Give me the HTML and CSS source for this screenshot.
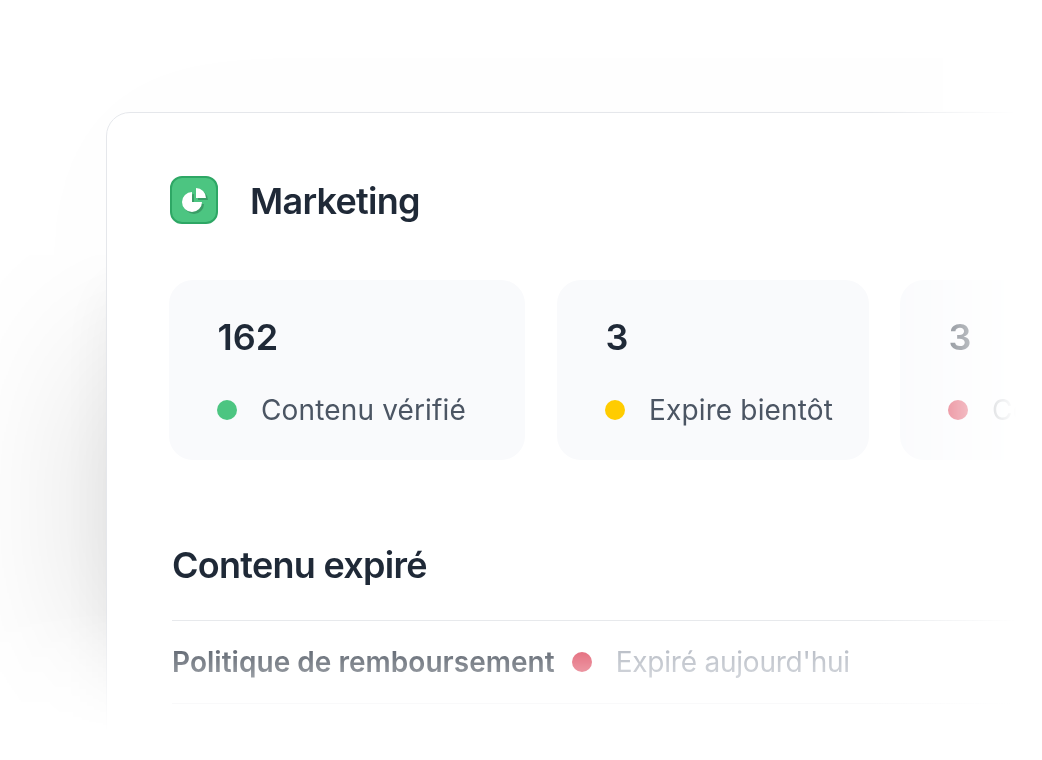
FILE: index.html
```html
<!DOCTYPE html>
<html lang="fr">
<head>
  <meta charset="UTF-8">
  <title>Marketing</title>
  <link rel="stylesheet" href="styles.css">
</head>
<body>

  <div class="fade-right">
    <div class="fade-bottom">
      <main class="card">

        <header class="card-header">
          <svg class="card-icon" width="48" height="48" viewBox="0 0 48 48">
            <rect x="1" y="1" width="46" height="46" rx="11" fill="#4cc581" stroke="#2ea765" stroke-width="2"/>
            <!-- pie shadow -->
            <g fill="#3a9d66" transform="translate(2 2)">
              <path d="M22 16a10 10 0 1 0 10 10H22z"/>
              <path d="M26 12a10 10 0 0 1 10 10H26z"/>
            </g>
            <g fill="#fff">
              <path d="M22 16a10 10 0 1 0 10 10H22z"/>
              <path d="M26 12a10 10 0 0 1 10 10H26z"/>
            </g>
          </svg>
          <h1>Marketing</h1>
        </header>

        <section class="stats">
          <div class="stat stat-verified">
            <div class="stat-number">162</div>
            <div class="stat-label"><span class="dot green"></span>Contenu vérifié</div>
          </div>
          <div class="stat stat-soon">
            <div class="stat-number">3</div>
            <div class="stat-label"><span class="dot yellow"></span>Expire bientôt</div>
          </div>
          <div class="stat stat-expired">
            <div class="stat-number">3</div>
            <div class="stat-label"><span class="dot red"></span>Co</div>
          </div>
        </section>

        <section class="expired">
          <h2>Contenu expiré</h2>
          <div class="row">
            <span class="row-title">Politique de remboursement</span>
            <span class="dot red"></span>
            <span class="row-status">Expiré aujourd'hui</span>
          </div>
        </section>

      </main>
    </div>
  </div>

</body>
</html>
```
FILE: styles.css
```css
* {
  box-sizing: border-box;
}

body {
  margin: 0;
  height: 760px;
  overflow: hidden;
  background-color: #fff;
  color: #1f2937;
  font-family: Inter, "Liberation Sans", sans-serif;
}

/* The card fades out towards the right and bottom edges */
.fade-right {
  height: 760px;
  overflow: hidden;
  mask-image: linear-gradient(to right, #000 870px, transparent 1016px);
}

.fade-bottom {
  height: 760px;
  padding: 112px 0 0 106px;
  overflow: hidden;
  mask-image: linear-gradient(to bottom, #000 612px, transparent 732px);
}

.card {
  width: 1200px;
  height: 660px;
  padding: 63px 0 0 63px;
  background-color: #fff;
  border: 1px solid #e5e7eb;
  border-radius: 24px;
  box-shadow:
    -185px 63px 170px -185px rgba(0, 0, 0, 0.17),
    -95px 80px 60px -95px rgba(0, 0, 0, 0.06),
    0 0 160px rgba(0, 0, 0, 0.015);
}

.card-header {
  display: flex;
  align-items: center;
  gap: 32px;
  height: 48px;
}

h1, h2 {
  margin: 0;
  font-size: 36px;
  line-height: 48px;
  font-weight: 600;
  letter-spacing: -0.72px;
}

h1 {
  padding-top: 2px;
}

.stats {
  display: flex;
  gap: 32px;
  margin: 56px 0 0 -1px;
}

.stat {
  flex: none;
  height: 180px;
  padding: 33px 0 0 48px;
  background-color: #f9fafc;
  border-radius: 24px;
}

.stat-verified {
  width: 356px;
}

.stat-soon {
  width: 312px;
}

.stat-expired {
  width: 330px;
  margin-left: -1px;
}

.stat-number {
  padding-left: 0.5px;
  font-size: 36px;
  line-height: 48px;
  font-weight: 600;
}

.stat-label {
  display: flex;
  align-items: center;
  gap: 24px;
  margin-top: 29px;
  color: #4b5563;
  font-size: 28px;
  line-height: 40px;
  font-weight: 420;
  letter-spacing: 0.15px;
  white-space: nowrap;
}

.dot {
  flex: none;
  width: 20px;
  height: 20px;
  border-radius: 50%;
}

.green {
  background-color: #4cc581;
}

.yellow {
  background-color: #ffcc00;
}

.red {
  background-color: #d92d45;
}

.expired {
  margin: 81px 0 0 2px;
}

.row {
  display: flex;
  align-items: center;
  height: 84px;
  margin-top: 31px;
  border-top: 1px solid #e5e7eb;
  border-bottom: 1px solid #e5e7eb;
  font-size: 28px;
}

.row-title {
  margin-right: 17px;
  font-weight: 600;
  letter-spacing: 0.03px;
}

.row-status {
  margin-left: 24px;
  color: #9ca3af;
  letter-spacing: -0.22px;
}
```
